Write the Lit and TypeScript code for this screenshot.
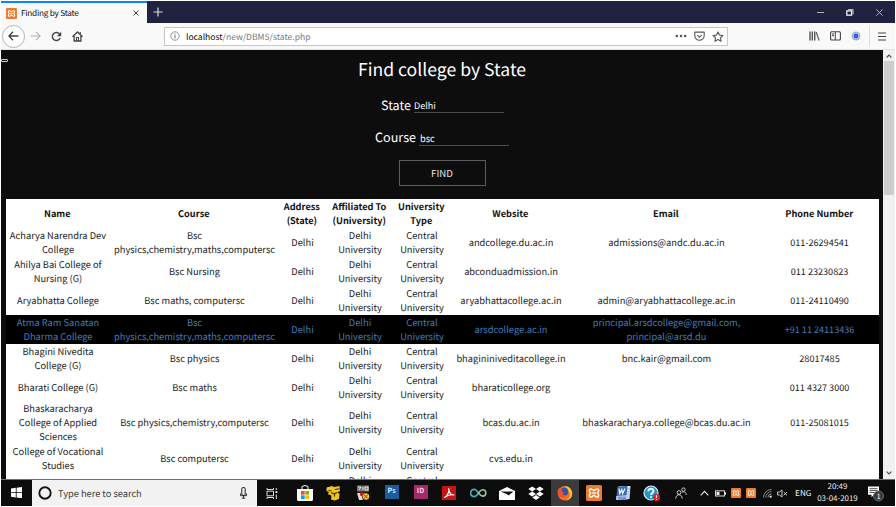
import { LitElement, html, svg, css, nothing } from "lit";
import type { TemplateResult, SVGTemplateResult } from "lit";
import { customElement, state } from "lit/decorators.js";
import { classMap } from "lit/directives/class-map.js";

const icon = (w: number, h: number, body: SVGTemplateResult, box = `0 0 ${w} ${h}`): TemplateResult =>
  html`<svg width=${w} height=${h} viewBox=${box} fill="none">${body}</svg>`;

const xampp = (size: number) =>
  icon(
    size,
    size,
    svg`<rect width="16" height="16" rx="1.6" fill="#ee7b2c"/>
      <path d="M5.600 4.200c-1.600-.6-2.800.8-2 2.100l1 1.600-1 1.800c-.8 1.600.7 2.900 2.100 2.100L8 10.200l2.300 1.600c1.500.8 2.900-.5 2.100-2.100l-1-1.800 1-1.600c.8-1.400-.5-2.700-2-2.100L8 5.600z" stroke="#fff" stroke-width="1.500" stroke-linejoin="round"/>
      <path d="M6 8h4" stroke="#fff" stroke-width="1.300"/>`,
    "0 0 16 16"
  );

interface College {
  name: string;
  course: string;
  website: string;
  email: string;
  phone: string;
  tall?: boolean;
}

const COLLEGES: College[] = [
  { name: "Acharya Narendra Dev\nCollege", course: "Bsc\nphysics,chemistry,maths,computersc", website: "andcollege.du.ac.in", email: "admissions@andc.du.ac.in", phone: "011-26294541" },
  { name: "Ahilya Bai College of\nNursing (G)", course: "Bsc Nursing", website: "abconduadmission.in", email: "", phone: "011 23230823" },
  { name: "Aryabhatta College", course: "Bsc maths, computersc", website: "aryabhattacollege.ac.in", email: "admin@aryabhattacollege.ac.in", phone: "011-24110490" },
  { name: "Atma Ram Sanatan\nDharma College", course: "Bsc\nphysics,chemistry,maths,computersc", website: "arsdcollege.ac.in", email: "principal.arsdcollege@gmail.com,\nprincipal@arsd.du", phone: "+91 11 24113436" },
  { name: "Bhagini Nivedita\nCollege (G)", course: "Bsc physics", website: "bhagininiveditacollege.in", email: "bnc.kair@gmail.com", phone: "28017485" },
  { name: "Bharati College (G)", course: "Bsc maths", website: "bharaticollege.org", email: "", phone: "011 4327 3000" },
  { name: "Bhaskaracharya\nCollege of Applied\nSciences", course: "Bsc physics,chemistry,computersc", website: "bcas.du.ac.in", email: "bhaskaracharya.college@bcas.du.ac.in", phone: "011-25081015", tall: true },
  { name: "College of Vocational\nStudies", course: "Bsc computersc", website: "cvs.edu.in", email: "", phone: "" },
];

const HEADERS = ["Name", "Course", "Address\n(State)", "Affiliated To\n(University)", "University\nType", "Website", "Email", "Phone Number"];

@customElement("browser-chrome")
class BrowserChrome extends LitElement {
  static styles = css`
    :host { display: block; font-family: "Noto Sans CJK SC", "Noto Sans", sans-serif; text-rendering: geometricPrecision; }
    svg { display: block; flex: none; }
    .tabs { display: flex; height: 22px; background: #20223f; }
    .tab { display: flex; align-items: center; width: 146px; box-sizing: border-box; padding: 0 8px 0 5px; border-top: 2px solid #0a84ff; background: #f9f9fa; color: #0c0c0d; font-size: 8.2px; letter-spacing: -0.22px; line-height: 18px; }
    .tab-title { flex: 1; padding-left: 4px; white-space: nowrap; }
    .new { padding: 6px 0 0 6px; }
    .controls { display: flex; align-items: center; margin-left: auto; gap: 22px; padding-right: 12px; }
    .bar { display: flex; align-items: center; height: 27px; box-sizing: border-box; background: #f9f9fa; border-bottom: 1px solid #e3e3e6; padding-left: 1px; }
    .back { display: flex; align-items: center; justify-content: center; width: 21px; height: 21px; border: 1px solid #b4b4b7; border-radius: 50%; background: #fff; }
    .nav { display: flex; align-items: center; gap: 10px; padding-left: 5px; width: 134px; }
    .url { display: flex; align-items: center; width: 564px; height: 19px; box-sizing: border-box; border: 1px solid #c6c6c9; background: #fff; padding: 0 3px 0 5px; font-size: 8.55px; color: #78787c; }
    .address { flex: 1; padding: 1px 0 0 6px; }
    .host { color: #0c0c0d; }
    .acts { display: flex; align-items: center; gap: 7px; }
    .tools { display: flex; align-items: center; gap: 10px; margin-left: auto; padding-right: 9px; }
    .sep { width: 1px; height: 22px; background: #dcdcdf; margin: 0 -2px; }
  `;
  render() {
    return html`
      <div class="tabs">
        <div class="tab">
          ${xampp(11)}
          <span class="tab-title">Finding by State</span>
          ${icon(6, 6, svg`<path d="M.5.5l5 5M5.500.5l-5 5" stroke="#444" stroke-width="1"/>`)}
        </div>
        <div class="new">${icon(10, 10, svg`<path d="M5 .5v9M.5 5h9" stroke="#dadae4" stroke-width="1.200"/>`)}</div>
        <div class="controls">
          ${icon(7, 7, svg`<path d="M0 3.500h7" stroke="#b4b5c4"/>`)}
          ${icon(8, 7, svg`<path d="M.8 1.800h4.800v4.400H.8z" stroke="#fff" stroke-width="1.200"/><path d="M2.200.6h4.900v4.600" stroke="#dfe0e8" stroke-width=".9"/>`)}
          ${icon(7, 7, svg`<path d="M.3.3l6.400 6.400M6.700.3L.3 6.700" stroke="#cfcfdb" stroke-width=".8"/>`)}
        </div>
      </div>
      <div class="bar">
        <div class="back">${icon(11, 10, svg`<path d="M10.500 5H1M5 .8L.9 5 5 9.200" stroke="#444447" stroke-width="1.350"/>`)}</div>
        <div class="nav">
          ${icon(11, 10, svg`<path d="M.5 5H10M6 .8L10.100 5 6 9.200" stroke="#b4b4b7" stroke-width="1.100"/>`)}
          ${icon(11, 11, svg`<path d="M9.100 7A4 4 0 1 1 8.500 2.900" stroke="#444447" stroke-width="1.400"/><path d="M10.200.8v4.400H5.900z" fill="#444447"/>`)}
          ${icon(11, 11, svg`<path d="M.5 5.800l5-4.800 5 4.800M2.100 5v5h6.800V5" stroke="#444447" stroke-width="1.300"/><path d="M4.500 10V6.500h2V10M8.300 1v2" stroke="#444447" stroke-width="1.100"/>`)}
        </div>
        <div class="url">
          ${icon(10, 10, svg`<circle cx="5" cy="5" r="4.200" stroke="#77777b" stroke-width=".8"/><path d="M5 4.300v3M5 2.500v1" stroke="#66666a" stroke-width="1"/>`)}
          <span class="address"><span class="host">localhost</span>/new/DBMS/state.php</span>
          <div class="acts">
            ${icon(12, 4, svg`<circle cx="1.800" cy="2" r="1.300" fill="#555558"/><circle cx="6" cy="2" r="1.300" fill="#555558"/><circle cx="10.200" cy="2" r="1.300" fill="#555558"/>`)}
            ${icon(11, 10, svg`<path d="M.8 1.100h9.400v3.500a4.700 4.600 0 0 1-9.400 0z" stroke="#555558" stroke-width="1.100" stroke-linejoin="round"/><path d="M3.200 4.100l2.300 2.200 2.300-2.200" stroke="#555558" stroke-width="1.100"/>`)}
            ${icon(12, 11, svg`<path d="M6 .9l1.500 3.200 3.500.4-2.600 2.400.7 3.400L6 8.600l-3.100 1.700.7-3.400L1 4.500l3.500-.4z" stroke="#555558" stroke-width="1.100" stroke-linejoin="round"/>`)}
          </div>
        </div>
        <div class="tools">
          ${icon(11, 10, svg`<path d="M1 .5v9M3.300.5v9M5.700.5v9" stroke="#555558" stroke-width="1.400"/><path d="M7.200 1l2.900 8.500" stroke="#555558" stroke-width="1.100"/>`)}
          ${icon(11, 10, svg`<rect x=".6" y=".8" width="9.800" height="8.200" rx="1" stroke="#444447" stroke-width="1.100"/><path d="M5.300 1v8M2 3h2M2 4.700h2" stroke="#444447" stroke-width="1"/>`)}
          ${icon(10, 10, svg`<circle cx="5" cy="5" r="4.500" fill="#c3d0e4"/><circle cx="5" cy="5" r="3.600" stroke="#789ac8" stroke-width="1.200" stroke-dasharray="1.400 .8"/><circle cx="5" cy="5" r="2.200" fill="#2434f0"/><circle cx="5" cy="5" r=".7" fill="#b6c5ff"/>`)}
          <div class="sep"></div>
          ${icon(8, 9, svg`<path d="M0 1h8M0 4.500h8M0 8h8" stroke="#444447" stroke-width="1.100"/>`)}
        </div>
      </div>
    `;
  }
}

@customElement("college-page")
class CollegePage extends LitElement {
  @state() private hovered = 3;

  static styles = css`
    :host { display: flex; flex: 1; min-height: 0; background: #0d0d0d; color: #fff; font-family: "Noto Sans CJK SC", "Noto Sans", sans-serif; text-rendering: geometricPrecision; }
    svg { display: block; flex: none; }
    .page { flex: 1; display: flex; flex-direction: column; overflow: hidden; position: relative; }
    .toggle { position: absolute; left: 0; top: 9px; width: 5px; height: 1px; border: 1px solid #d0d0d0; border-radius: 1px; }
    .form { display: flex; flex-direction: column; align-items: center; height: 149px; flex: none; width: 882px; }
    h1 { margin: 5px 0 0; font-size: 17.6px; line-height: 29px; height: 28px; font-weight: 400; }
    .field { display: flex; align-items: flex-start; height: 17px; padding-left: 1px; font-size: 12.6px; line-height: 17px; }
    .field.state { margin-top: 13px; }
    .field.course { margin-top: 16px; margin-bottom: 14px; line-height: 16px; padding-left: 0; }
    .input { display: block; box-sizing: border-box; width: 90px; height: 17px; margin-left: 3px; border-bottom: 1px solid #4d4d4d; font-size: 9px; line-height: 20px; }
    .course .input { padding-left: 1px; font-size: 9.3px; line-height: 19px; }
    .find { display: flex; align-items: center; justify-content: center; box-sizing: border-box; width: 87px; height: 26px; padding-bottom: 1px; border: 1px solid #5c5c5c; font-size: 9.7px; color: #e6e6e6; }
    .table { margin-left: 5px; width: 873px; background: #fff; color: #222; font-size: 9.3px; line-height: 14px; }
    .row { display: grid; grid-template-columns: 102px 171px 45px 70px 54px 124px 187px 120px; height: 28.85px; }
    .row.tall { height: 43px; }
    .row.head { height: 29.4px; font-size: 9.2px; font-weight: 700; color: #111; }
    .row.active { background: #000; color: #417db9; }
    .cell { display: flex; align-items: center; justify-content: center; padding: 0 0 1.2px 2px; text-align: center; white-space: pre; }
    .active .cell { padding-bottom: 0.4px; }
    .head .cell { padding: 0 0 1.6px 0.6px; }
    .cell.phone { font-size: 9.1px; padding-left: 1px; }
    .row.next .cell { align-items: flex-start; }
    .scroll { display: flex; flex-direction: column; align-items: center; justify-content: space-between; width: 12px; background: #f0f0f0; }
    .up { display: flex; flex-direction: column; align-items: center; padding-top: 4px; }
    .thumb { width: 10px; height: 134px; margin-top: 3px; background: #cdcdcd; }
    .down { padding-bottom: 4px; }
  `;

  private row(c: College, i: number) {
    return html`
      <div class=${classMap({ row: true, tall: !!c.tall, active: i === this.hovered })}>
        ${[c.name, c.course, "Delhi", "Delhi\nUniversity", "Central\nUniversity", c.website, c.email].map((t) => html`<div class="cell">${t || nothing}</div>`)}
        <div class="cell phone">${c.phone || nothing}</div>
      </div>
    `;
  }

  render() {
    return html`
      <div class="page">
        <div class="toggle"></div>
        <div class="form">
          <h1>Find college by State</h1>
          <div class="field state">State<span class="input">Delhi</span></div>
          <div class="field course">Course<span class="input">bsc</span></div>
          <div class="find">FIND</div>
        </div>
        <div class="table">
          <div class="row head">${HEADERS.map((h) => html`<div class="cell">${h}</div>`)}</div>
          ${COLLEGES.map((c, i) => this.row(c, i))}
          <div class="row next">${["", "", "", "Delhi", "Central", "", "", ""].map((t) => html`<div class="cell">${t || nothing}</div>`)}</div>
        </div>
      </div>
      <div class="scroll">
        <div class="up">
          ${icon(6, 4, svg`<path d="M.6 3.500L3 1.100l2.400 2.400" stroke="#505050" stroke-width="1.200"/>`)}
          <div class="thumb"></div>
        </div>
        <div class="down">${icon(6, 4, svg`<path d="M.6.6L3 3 5.400.6" stroke="#505050" stroke-width="1.200"/>`)}</div>
      </div>
    `;
  }
}

const APPS: { active?: boolean; art: TemplateResult }[] = [
  { art: icon(16, 16, svg`<path d="M0 4h16v11l-1 1H1l-1-1z" fill="#fff"/><path d="M5 4V1.500Q8-.5 11 1.500V4" stroke="#fff" stroke-width="1"/><path d="M4 6h3.700v3.700H4z" fill="#f25022"/><path d="M8.300 6H12v3.700H8.300z" fill="#7fba00"/><path d="M4 10.300h3.700V14H4z" fill="#00a4ef"/><path d="M8.300 10.300H12V14H8.300z" fill="#ffb900"/>`) },
  { art: icon(15, 16, svg`<path d="M.5 2.500L6 1l2 1 5.500-1 .5 5-3 1.500 2.500 1-.5 5.500-4.500 1.500-3.500-1 .5-4-3.500-1.300L2.800 7 .5 6z" fill="#f2c31f"/><path d="M9 4.500l4.500-.8M5 7.800l3.500 1 2.500-1.300M8.500 9v2.500M2.500 5.500l3 .5" stroke="#3a2d00" stroke-width="1.100"/>`) },
  { art: icon(14, 16, svg`<rect x="1" y=".5" width="12" height="6" fill="#777"/><path d="M2 2h3L3 5M7 2v3M9 2h3v3H9z" stroke="#eee" stroke-width=".9"/><path d="M1 8h4l2 7H3z" fill="#ddd"/><path d="M4 7.500h5l-2 4-3-1z" fill="#cf2128"/><circle cx="10" cy="11.500" r="3.200" fill="#f0d127"/><path d="M8 9.500l4 4M12 9.500l-4 4" stroke="#b52021" stroke-width="1"/>`) },
  { art: html`<span class="badge ps">Ps</span>` },
  { art: html`<span class="badge id">ID</span>` },
  { art: icon(14, 14, svg`<rect width="14" height="14" fill="#c41414"/><path d="M2.500 11.500C5 10 7.200 6.500 6.800 2.500 6.900 6.500 9 9 12 9 8.800 8.200 5.500 9 2.500 11.500z" stroke="#fff" stroke-width="1.100" stroke-linejoin="round"/>`) },
  { art: icon(17, 10, svg`<path d="M8.500 5C6.500 2.200 5.600 1.300 4.300 1.300a3.600 3.600 0 0 0 0 7.400C5.800 8.700 7 7.300 8.500 5" stroke="#45a9b6" stroke-width="1.800"/><path d="M8.500 5c1.800-2.700 2.800-3.300 4.100-3.300a3.200 3.200 0 0 1 0 6.400c-1.400 0-2.300-.7-4.100-3.100z" stroke="#8fc99d" stroke-width="1.600"/>`) },
  { art: icon(16, 13, svg`<path d="M0 4l8-4 8 4v9H0z" fill="#fff"/><path d="M1.500 4.500h13L9.500 8.500 8 7.300z" fill="#151515"/>`) },
  { art: icon(16, 15, svg`<path d="M4.200.5L8 3 4.200 5.500.3 3zM11.800.5l3.900 2.500-3.900 2.500L8 3zM4.200 5.500L8 8l-3.800 2.500L.3 8zM11.800 5.500L15.700 8l-3.900 2.500L8 8zM4.300 11.400L8 9l3.700 2.400L8 14z" fill="#fff"/>`) },
  { active: true, art: icon(16, 16, svg`<circle cx="8" cy="8.300" r="7.300" fill="#f7701f"/><path d="M8.500 1C13 2 16 6 15 10.500 14 14 11 15.700 8 15.600c4-1 5.500-4 4.500-7.600C12 5 9 4.500 8.500 1z" fill="#ffc32b"/><circle cx="7.300" cy="6.700" r="4" fill="#2a56b5"/><path d="M1 4.500l1.500-2 .8 1.700 2.700.3c-1 .8-1.500 1.500-1.200 2.300l2.600.7-2 1.700c1 1.300 3 1.500 4.600.3-1 3-5 4-7.500 1.500C.8 9.500.5 7 1 4.500z" fill="#f2512a"/>`) },
  { art: xampp(16) },
  { art: icon(16, 16, svg`<path d="M4 1h11.500l-1 13H4z" fill="#dbe5f8"/><path d="M2.500 1.500l10-.5-1 9.500-10 .5z" fill="#3968b5"/><path d="M4 3.700l.8 4.800 2-4 .8 4L10 3.500" stroke="#fff" stroke-width="1.200"/><path d="M1.200 11l12.300-.5L13 14.500l-12 .5z" fill="#b9cdf0"/><path d="M3 12.200h8M3 13.700h8" stroke="#3968b5" stroke-width=".7"/><path d="M12.700 4h2M12.500 6.500h2M12.300 9h2" stroke="#6c90c8" stroke-width=".8"/>`) },
  { art: icon(18, 17, svg`<circle cx="8" cy="8" r="7" fill="#2196c9" stroke="#d7edf5" stroke-width="1.200"/><path d="M5.300 6.200C5.300 3 10.500 3 10.500 6c0 2-2.500 2-2.500 4" stroke="#fff" stroke-width="1.800"/><circle cx="8" cy="12" r="1" fill="#fff"/><circle cx="13.500" cy="12.500" r="3.500" fill="#e3212b"/><path d="M13.500 10.200v2.800M13.500 14v1" stroke="#fff" stroke-width="1.100"/>`) },
];

@customElement("task-bar")
class TaskBar extends LitElement {
  static styles = css`
    :host { display: flex; flex: none; background: #0c0c0c; color: #eee; font-family: "Noto Sans CJK SC", "Noto Sans", sans-serif; text-rendering: geometricPrecision; }
    svg { display: block; flex: none; }
    .start { display: flex; align-items: center; justify-content: center; width: 31px; padding-bottom: 1px; }
    .search { display: flex; align-items: center; box-sizing: border-box; width: 225px; background: #f2f2f2; color: #3c3c3c; font-size: 9.25px; padding: 0 10px 1px 6px; }
    .hint { flex: 1; padding-left: 6px; }
    .view { display: flex; align-items: center; justify-content: center; width: 30px; margin-right: 3.5px; }
    .app { display: flex; align-items: center; justify-content: center; width: 28.9px; }
    .app.active { background: #3b3b3b; }
    .badge { width: 14px; height: 14px; font-size: 7px; font-weight: 700; line-height: 13px; text-align: center; margin-bottom: 2px; }
    .ps { background: #1e5a9c; color: #d2ecff; }
    .id { background: #a12a68; color: #ffd0e8; }
    .tray { display: flex; align-items: center; flex: 1; padding-left: 9px; }
    .chev { margin-left: 13px; }
    .bat { margin-left: 6px; }
    .x1 { margin-left: 5px; }
    .x2 { margin-left: 5px; }
    .wifi { margin-left: 7px; }
    .vol { margin-left: 5px; }
    .lang { margin-left: 7px; font-size: 8.2px; }
    .clock { display: flex; flex-direction: column; align-items: center; width: 42px; margin-left: 5px; font-size: 7.9px; line-height: 12px; text-align: center; white-space: nowrap; }
    .note { margin-left: 9px; }
  `;
  render() {
    return html`
      <div class="start">${icon(11, 11, svg`<path d="M0 1.500l4.800-.7v4.400H0zM5.600.7L11 0v5.200H5.600zM0 6h4.800v4.400L0 9.700zM5.600 6H11v5.200l-5.400-.7z" fill="#fff"/>`)}</div>
      <div class="search">
        ${icon(14, 14, svg`<circle cx="7" cy="7" r="5.700" stroke="#151515" stroke-width="1.900"/>`)}
        <span class="hint">Type here to search</span>
        ${icon(7, 12, svg`<rect x="1.800" y=".6" width="3.400" height="7.800" rx="1.200" stroke="#222" stroke-width="1"/><path d="M.5 6.500v2.200h6V6.500M3.500 9v2M1.800 11.200h3.400" stroke="#222" stroke-width=".9"/>`)}
      </div>
      <div class="view">${icon(12, 11, svg`<path d="M1 0v1.500h6.500V0M1 11V9.500h6.500V11M1 3.200h6.500v4.600H1zM10.300 0v2M10.300 6.500V11" stroke="#dedede" stroke-width="1"/><path d="M9.500 3.200h1.800v1.800H9.500z" fill="#fff"/>`)}</div>
      ${APPS.map((a) => html`<div class=${classMap({ app: true, active: !!a.active })}>${a.art}</div>`)}
      <div class="tray">
        ${icon(12, 12, svg`<circle cx="4" cy="5.500" r="1.900" stroke="#ddd" stroke-width=".9"/><path d="M.8 11.500c0-5 6.400-5 6.400 0" stroke="#ddd" stroke-width=".9"/><circle cx="8.500" cy="2.600" r="1.700" stroke="#ddd" stroke-width=".9"/><path d="M7 5.300c2.500-1.300 4.200.2 4.200 2.700" stroke="#ddd" stroke-width=".9"/>`)}
        <div class="chev">${icon(9, 6, svg`<path d="M.7 5.300l3.800-4 3.800 4" stroke="#eee" stroke-width="1.100"/>`)}</div>
        <div class="bat">${icon(11, 7, svg`<rect x=".5" y=".8" width="9" height="5.200" stroke="#eee" stroke-width=".9"/><path d="M1.500 1.800h3V5h-3z" fill="#eee"/><path d="M10.500 2.300v2.400" stroke="#eee"/>`)}</div>
        <div class="x1">${xampp(10)}</div>
        <div class="x2">${xampp(10)}</div>
        <div class="wifi">${icon(9, 9, svg`<path d="M.5 8.500a8 8 0 0 1 8-8M2.700 8.500a5.800 5.800 0 0 1 5.800-5.800M4.900 8.500a3.600 3.600 0 0 1 3.600-3.600" stroke="#9a9a9a" stroke-width=".9"/><circle cx="7.700" cy="7.700" r="1.100" fill="#eee"/>`)}</div>
        <div class="vol">${icon(11, 9, svg`<path d="M.6 3h2L5 .9v7.200L2.600 6h-2z" stroke="#ddd" stroke-width=".9"/><path d="M6.700 3l3.300 3.300M10 3L6.700 6.300" stroke="#ddd" stroke-width=".9"/>`)}</div>
        <span class="lang">ENG</span>
        <div class="clock"><span>20:49</span><span>03-04-2019</span></div>
        <div class="note">${icon(18, 17, svg`<path d="M1 1.500h11v8.200H7l-2.500 2.600V9.700H1z" fill="#fff"/><path d="M2.500 3.700h8M2.500 5.600h8M2.500 7.500h5" stroke="#222" stroke-width=".8"/><circle cx="11.500" cy="11" r="5" fill="#3a3a3a" stroke="#777" stroke-width=".8"/><text x="11.500" y="13.800" fill="#fff" font-size="7.500" text-anchor="middle">1</text>`)}</div>
      </div>
    `;
  }
}

@customElement("app-root")
class AppRoot extends LitElement {
  static styles = css`
    :host { display: flex; flex-direction: column; box-sizing: border-box; width: 896px; height: 507px; overflow: hidden; background: #fff; padding: 1px; }
    task-bar { border-top: 1px solid #6f6f6f; height: 26px; }
  `;
  render() {
    return html`<browser-chrome></browser-chrome><college-page></college-page><task-bar></task-bar>`;
  }
}
